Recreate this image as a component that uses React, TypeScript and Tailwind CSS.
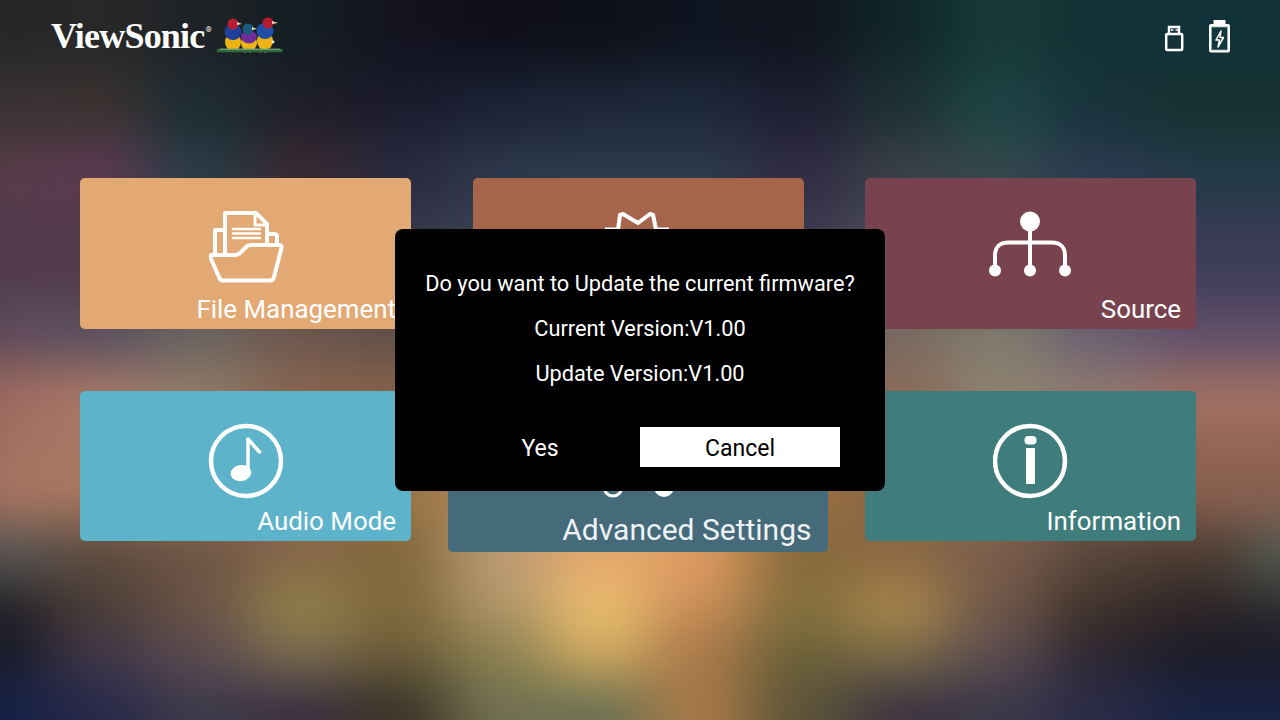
import type { ReactNode } from "react";

// Sampled colours of the blurred wallpaper: one row per band, one column per 100px
const xs = [0, 100, 200, 300, 400, 500, 600, 700, 800, 900, 1000, 1100, 1200, 1300];
const bands: [number, number, string[]][] = [
  [-60, 70, ["#262626", "#282828", "#1e2226", "#141e22", "#131320", "#0e0e1a", "#0e1018", "#0e1420", "#10141e", "#10262a", "#163a38", "#123034", "#12323a", "#12323a"]],
  [70, 140, ["#383234", "#3a3230", "#1c2c32", "#1e1e26", "#1a1a2c", "#1a2234", "#1c2638", "#1c2838", "#1e1c30", "#1e3034", "#1c4444", "#18323c", "#16302f", "#16302f"]],
  [140, 215, ["#583c48", "#5c3a50", "#283c48", "#3a2a30", "#2a2a40", "#2e384c", "#2e3a4c", "#2e3a4c", "#302c44", "#3a4048", "#34484c", "#2a3a50", "#243a48", "#243a48"]],
  [215, 300, ["#503a4c", "#523a4c", "#4a4650", "#4a3c3c", "#3a3a4c", "#3c4454", "#404858", "#404858", "#3e3c50", "#50505a", "#55585a", "#44465a", "#3c3c56", "#3c3c56"]],
  [300, 365, ["#5f4b5a", "#5a5060", "#6a6460", "#6e584e", "#605048", "#7a6a68", "#8a7a70", "#8a7a70", "#6a5e60", "#7a6a60", "#807c6e", "#6a6072", "#604e6a", "#604e6a"]],
  [365, 440, ["#a06a60", "#a87868", "#907c68", "#886450", "#886048", "#a08068", "#b09078", "#b09078", "#8a7060", "#8a6a58", "#8e8270", "#907870", "#a07062", "#a07062"]],
  [440, 525, ["#a87460", "#a87860", "#907860", "#886450", "#9a7444", "#b08860", "#c09868", "#c09060", "#9a7040", "#8a6448", "#846850", "#846050", "#8a6050", "#8a6050"]],
  [525, 585, ["#555554", "#5a4a3e", "#6e5444", "#86684a", "#80663a", "#bc9c74", "#e6aa6c", "#e09c60", "#86683a", "#8c6a44", "#7a5c4c", "#54443a", "#4a3a30", "#505c54"]],
  [585, 630, ["#1e1c22", "#4a3c36", "#6a5446", "#94834a", "#80683c", "#b09468", "#ecc070", "#c88c58", "#84703c", "#ae8a4c", "#6e5648", "#3e3028", "#2c2428", "#2c2c2e"]],
  [630, 680, ["#181a28", "#403848", "#5c4a50", "#7a6a50", "#6a5c38", "#8a8050", "#d0aa60", "#a87848", "#6a6038", "#7a6a48", "#5c4c50", "#2a2630", "#1a1a24", "#1a1a28"]],
  [680, 790, ["#142048", "#28284a", "#3c3a4a", "#3a3040", "#3a3428", "#707050", "#6a7052", "#a87a48", "#5c5438", "#3c3440", "#3a3848", "#2a2a48", "#182244", "#182244"]],
];

function Background() {
  return (
    <svg className="absolute inset-0" width="1280" height="720" viewBox="0 0 1280 720">
      <defs>
        <filter id="wall" x="-10%" y="-10%" width="120%" height="120%" colorInterpolationFilters="sRGB">
          <feGaussianBlur stdDeviation="32 24" />
        </filter>
      </defs>
      <g filter="url(#wall)">
        {bands.map(([top, bottom, colors]) =>
          colors.map((c, i) => (
            <rect key={`${top}-${i}`} x={xs[i] - 51} y={top} width="102" height={bottom - top + 1} fill={c} />
          ))
        )}
        <rect x="-150" y="-60" width="100" height="850" fill="#303030" />
      </g>
    </svg>
  );
}

function Birds() {
  return (
    <svg width="66" height="40" viewBox="0 0 66 40">
      <path d="M19 30l-1 5M13 30l-1 5M34 32l-1 4M29 32l-1 4M49 31l-1 5M44 31l-1 5" stroke="#c9b27a" strokeWidth="1" />
      <ellipse cx="16" cy="25" rx="8" ry="9" fill="#eeb416" />
      <ellipse cx="16" cy="15" rx="8.5" ry="8" fill="#1f3f9c" />
      <circle cx="16" cy="7" r="5.5" fill="#b51d33" />
      <path d="M20 5l5 2-5 1z" fill="#e8d8b8" />
      <ellipse cx="32" cy="26" rx="8" ry="8" fill="#eeb416" />
      <ellipse cx="32" cy="20" rx="8" ry="6.5" fill="#6d2c9a" />
      <circle cx="31" cy="12" r="5.5" fill="#1a5a7c" />
      <path d="M35 10l5 2-5 1z" fill="#e8d8b8" />
      <ellipse cx="48" cy="24" rx="8" ry="9" fill="#eeb416" />
      <ellipse cx="48" cy="14" rx="8.5" ry="8" fill="#1f4fa6" />
      <circle cx="51" cy="6" r="5.5" fill="#b51d33" />
      <path d="M55 4l6 2-6 1z" fill="#e8d8b8" />
      <circle cx="56" cy="25" r="1.4" fill="white" />
      <path d="M1 33.5h63" stroke="#2f6a3c" strokeWidth="3.5" strokeLinecap="round" />
      <path d="M3 32.2h60" stroke="#a8c8a0" strokeWidth="0.8" />
    </svg>
  );
}

function Logo() {
  return (
    <div className="flex items-start">
      <span className="font-['Liberation_Serif',serif] font-bold text-[36px] leading-[40px] tracking-[-0.8px] text-white">
        ViewSonic
      </span>
      <span className="text-[8px] leading-none text-white mt-[10px] ml-[1px]">®</span>
      <div className="ml-[5px] mt-[1px]">
        <Birds />
      </div>
    </div>
  );
}

function FileIcon() {
  return (
    <svg width="76" height="76" viewBox="0 0 76 76" fill="none" stroke="white" strokeWidth="4" strokeLinejoin="round" strokeLinecap="round">
      <path d="M17 20H7v24" />
      <path d="M17 43V3h31l11 11v18" />
      <path d="M47 4v11h11" strokeWidth="3" />
      <path d="M60 24h6c2 0 3 1 3 3v6" />
      <path d="M25 19h27M25 23.5h27M25 28h27" strokeWidth="2.5" />
      <path d="M3 45h23c4 0 6-1 8-4l4-4c1-1 3-2 5-2h28c2 0 3 1 2.5 3L66 67c-.5 2-2 3.5-4 3.5H15c-2 0-3.5-1.5-4-3.5L3 49c-.5-2 0-4 0-4z" />
    </svg>
  );
}

function NetIcon() {
  return (
    <svg width="84" height="72" viewBox="0 0 84 72" fill="none" stroke="white" strokeWidth="4">
      <circle cx="41" cy="11.5" r="10" fill="white" stroke="none" />
      <path d="M41 18v46" />
      <path d="M6 62V45.5c0-8 5-13 13-13h44c8 0 13 5 13 13V62" />
      <circle cx="6" cy="60.5" r="6" fill="white" stroke="none" />
      <circle cx="41" cy="60.5" r="6" fill="white" stroke="none" />
      <circle cx="76" cy="60.5" r="6" fill="white" stroke="none" />
    </svg>
  );
}

function MusicIcon() {
  return (
    <svg width="76" height="76" viewBox="0 0 76 76" fill="none" stroke="white">
      <circle cx="38" cy="38" r="35" strokeWidth="4.5" />
      <path d="M40 15v35" strokeWidth="3.5" />
      <path d="M40 16l11.5 13" strokeWidth="3.5" strokeLinecap="round" />
      <ellipse cx="33" cy="50" rx="10.5" ry="8" fill="white" stroke="none" transform="rotate(-10 33 50)" />
    </svg>
  );
}

function InfoIcon() {
  return (
    <svg width="76" height="76" viewBox="0 0 76 76" fill="none" stroke="white">
      <circle cx="37" cy="38" r="35" strokeWidth="4.5" />
      <rect x="31.5" y="13" width="12" height="8.5" rx="4" fill="white" stroke="none" />
      <rect x="33" y="25" width="9" height="36" rx="1" fill="white" stroke="none" />
    </svg>
  );
}

function Tile({ label, className, children }: { label: string; className: string; children?: ReactNode }) {
  return (
    <div className={`relative flex flex-col items-center rounded-[5px] ${className}`}>
      {children}
      <span className="absolute right-[15px] bottom-[2px] text-[25.9px] leading-[36px] text-white">{label}</span>
    </div>
  );
}

export default function App() {
  return (
    <div className="relative w-[1280px] h-[720px] overflow-hidden bg-black font-['Roboto',sans-serif]">
      <Background />

      <div className="relative flex flex-col h-full">
        <header className="flex items-center justify-between h-[72px] pl-[51px] pr-[49px]">
          <Logo />
          <div className="flex items-center gap-[23px]">
            <svg width="22" height="34" viewBox="0 0 22 34" fill="none" stroke="white" strokeWidth="2.5">
              <rect x="3.2" y="15" width="16" height="16" rx="1" />
              <path d="M6 15V8h10v7" />
              <path d="M8 11h2.5M12.5 11H15" strokeWidth="1.6" />
            </svg>
            <svg width="23" height="34" viewBox="0 0 23 34">
              <path d="M5.5 1h12v5h-12z" fill="white" />
              <rect x="1" y="5" width="21" height="28.5" rx="2" fill="white" />
              <rect x="3.5" y="8" width="16" height="23" fill="#13383c" stroke="#9fb4b4" strokeWidth="0.8" />
              <path d="M13 12l-5 9h3.5l-1.5 7 5.5-9.5h-3.5z" fill="#16302f" stroke="white" strokeWidth="1.5" strokeLinejoin="round" />
            </svg>
          </div>
        </header>

        <main className="grid grid-cols-[331px_331px_331px] gap-x-[61.5px] gap-y-[62px] pl-[80px] pt-[106px]">
          <Tile label="File Management" className="h-[151px] bg-[#e2a975]">
            <div className="mt-[32px]"><FileIcon /></div>
          </Tile>
          <Tile label="" className="h-[151px] bg-[#a6654b]">
            <svg className="mt-[32px]" width="70" height="22" viewBox="0 0 70 22" fill="none" stroke="white" strokeWidth="4">
              <path d="M2 19.5h13L17 5l3-1 15 9 12-9 3 1 3 14.5h13" strokeLinejoin="round" />
            </svg>
          </Tile>
          <Tile label="Source" className="h-[151px] bg-[#78434f]">
            <div className="mt-[32px]"><NetIcon /></div>
          </Tile>
          <Tile label="Audio Mode" className="h-[150px] bg-[#5db4ca]">
            <div className="mt-[32px]"><MusicIcon /></div>
          </Tile>
          <div className="relative">
            <div className="absolute left-[-25px] top-0 w-[380px] h-[161px] rounded-[5px] bg-[#456a7a] flex flex-col items-center">
              <svg className="mt-[89px]" width="76" height="20" viewBox="0 0 76 20" fill="none" stroke="white" strokeWidth="3">
                <circle cx="13" cy="7" r="9" />
                <circle cx="64" cy="7" r="10" fill="white" stroke="none" />
              </svg>
              <span className="absolute right-[16px] bottom-[2px] text-[30px] leading-[40px] text-[#eef2f4]">Advanced Settings</span>
            </div>
          </div>
          <Tile label="Information" className="h-[150px] bg-[#3f7c7c]">
            <div className="mt-[32px]"><InfoIcon /></div>
          </Tile>
        </main>
      </div>

      <div className="absolute left-[395px] top-[229px] w-[490px] h-[262px] rounded-[8px] bg-black text-white flex flex-col items-center text-[21.75px]">
        <p className="mt-[39px] leading-[32px]">Do you want to Update the current firmware?</p>
        <p className="mt-[13px] leading-[32px]">Current Version:V1.00</p>
        <p className="mt-[13px] leading-[32px]">Update Version:V1.00</p>
        <div className="flex mt-[37px] w-full pl-[45px] text-[23px]">
          <button className="w-[200px] h-[40px] pt-[4px]">Yes</button>
          <button className="w-[200px] h-[40px] pt-[4px] bg-white text-black">Cancel</button>
        </div>
      </div>
    </div>
  );
}
